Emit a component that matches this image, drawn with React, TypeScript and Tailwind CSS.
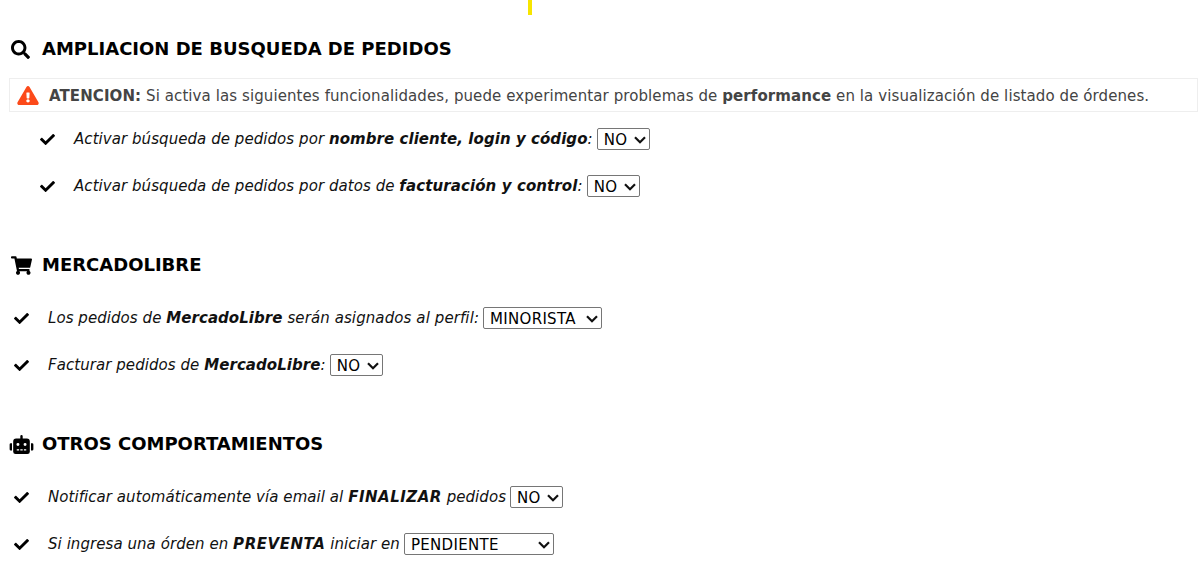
import React from "react";
import { FaCheck, FaExclamationTriangle, FaRobot, FaSearch, FaShoppingCart } from "react-icons/fa";

const pageFont = "font-['DejaVu_Sans',Verdana,sans-serif]";

// Section heading with its icon
const SectionTitle = ({ icon, title, className }: { icon: React.ReactNode; title: string; className: string }) => (
  <h2 className={`flex items-center text-[18px] leading-[24px] font-bold text-black ${className}`}>
    <span className="flex w-[42px] pl-[11px]">{icon}</span>
    {title}
  </h2>
);

// One option row: check, italic label, select
const OptionRow = ({
  children,
  value,
  widthClass,
  className,
}: {
  children: React.ReactNode;
  value: string;
  widthClass: string;
  className: string;
}) => (
  <div className={`flex h-[22px] items-center text-[15px] italic text-[#111] tracking-[0.06px] ${className}`}>
    <FaCheck className="mr-[19px] h-[15px] w-[15px] shrink-0 text-black" />
    <span className="whitespace-pre">{children}</span>
    <span className={`relative ml-[4px] flex h-[22px] ${widthClass}`}>
      <select
        defaultValue={value}
        className="h-full w-full appearance-none rounded-[2px] border border-[#767676] bg-white pl-[6px] text-[15px] not-italic tracking-[0.3px] text-black"
      >
        <option>{value}</option>
      </select>
      <svg viewBox="0 0 12 8" className="pointer-events-none absolute top-[8px] right-[4px] h-[8px] w-[12px]" fill="none" stroke="#111" strokeWidth="2.2">
        <path d="M1 1.2 6 6.2 11 1.2" />
      </svg>
    </span>
  </div>
);

export default function App() {
  return (
    <div className={`h-[565px] w-[1198px] overflow-hidden bg-white ${pageFont}`}>
      <div className="ml-[528px] h-[15px] w-[4px] bg-[#f7e500]" />

      <SectionTitle icon={<FaSearch className="h-[19px] w-[19px]" />} title="AMPLIACION DE BUSQUEDA DE PEDIDOS" className="mt-[22px]" />

      <div className="mt-[17px] ml-[9px] flex h-[34px] items-center border border-[#eeeeee] pl-[7px] text-[15px] text-[#444] tracking-[0.09px] whitespace-pre">
        <FaExclamationTriangle className="mr-[10px] h-[19px] w-[22px] shrink-0 text-[#fc4a1a]" />
        <span className="pt-[2px]">
          <b>ATENCION:</b> Si activa las siguientes funcionalidades, puede experimentar problemas de <b>performance</b> en la visualización de listado de órdenes.
        </span>
      </div>

      <div className="pl-[40px]">
        <OptionRow value="NO" widthClass="w-[53px]" className="mt-[16px]">
          Activar búsqueda de pedidos por <b>nombre cliente, login y código</b>:
        </OptionRow>
        <OptionRow value="NO" widthClass="w-[53px]" className="mt-[25px]">
          Activar búsqueda de pedidos por datos de <b className="tracking-[0.1px]">facturación y control</b>:
        </OptionRow>
      </div>

      <SectionTitle icon={<FaShoppingCart className="h-[19px] w-[21px]" />} title="MERCADOLIBRE" className="mt-[56px]" />

      <div className="pl-[14px]">
        <OptionRow value="MINORISTA" widthClass="w-[119px]" className="mt-[30px]">
          Los pedidos de <b>MercadoLibre</b> <span className="tracking-[0.1px]">serán asignados al perfil:</span>
        </OptionRow>
        <OptionRow value="NO" widthClass="w-[53px]" className="mt-[25px]">
          Facturar pedidos de <b>MercadoLibre</b>:
        </OptionRow>
      </div>

      <SectionTitle icon={<FaRobot className="-ml-[2px] h-[19px] w-[25px]" />} title="OTROS COMPORTAMIENTOS" className="mt-[56px]" />

      <div className="pl-[14px]">
        <OptionRow value="NO" widthClass="w-[53px]" className="mt-[30px]">
          Notificar automáticamente vía email al <b className="tracking-[0.5px]">FINALIZAR</b> pedidos
        </OptionRow>
        <OptionRow value="PENDIENTE" widthClass="w-[150px]" className="mt-[25px]">
          Si ingresa una órden en <b className="tracking-[0.55px]">PREVENTA</b> iniciar en
        </OptionRow>
      </div>
    </div>
  );
}
